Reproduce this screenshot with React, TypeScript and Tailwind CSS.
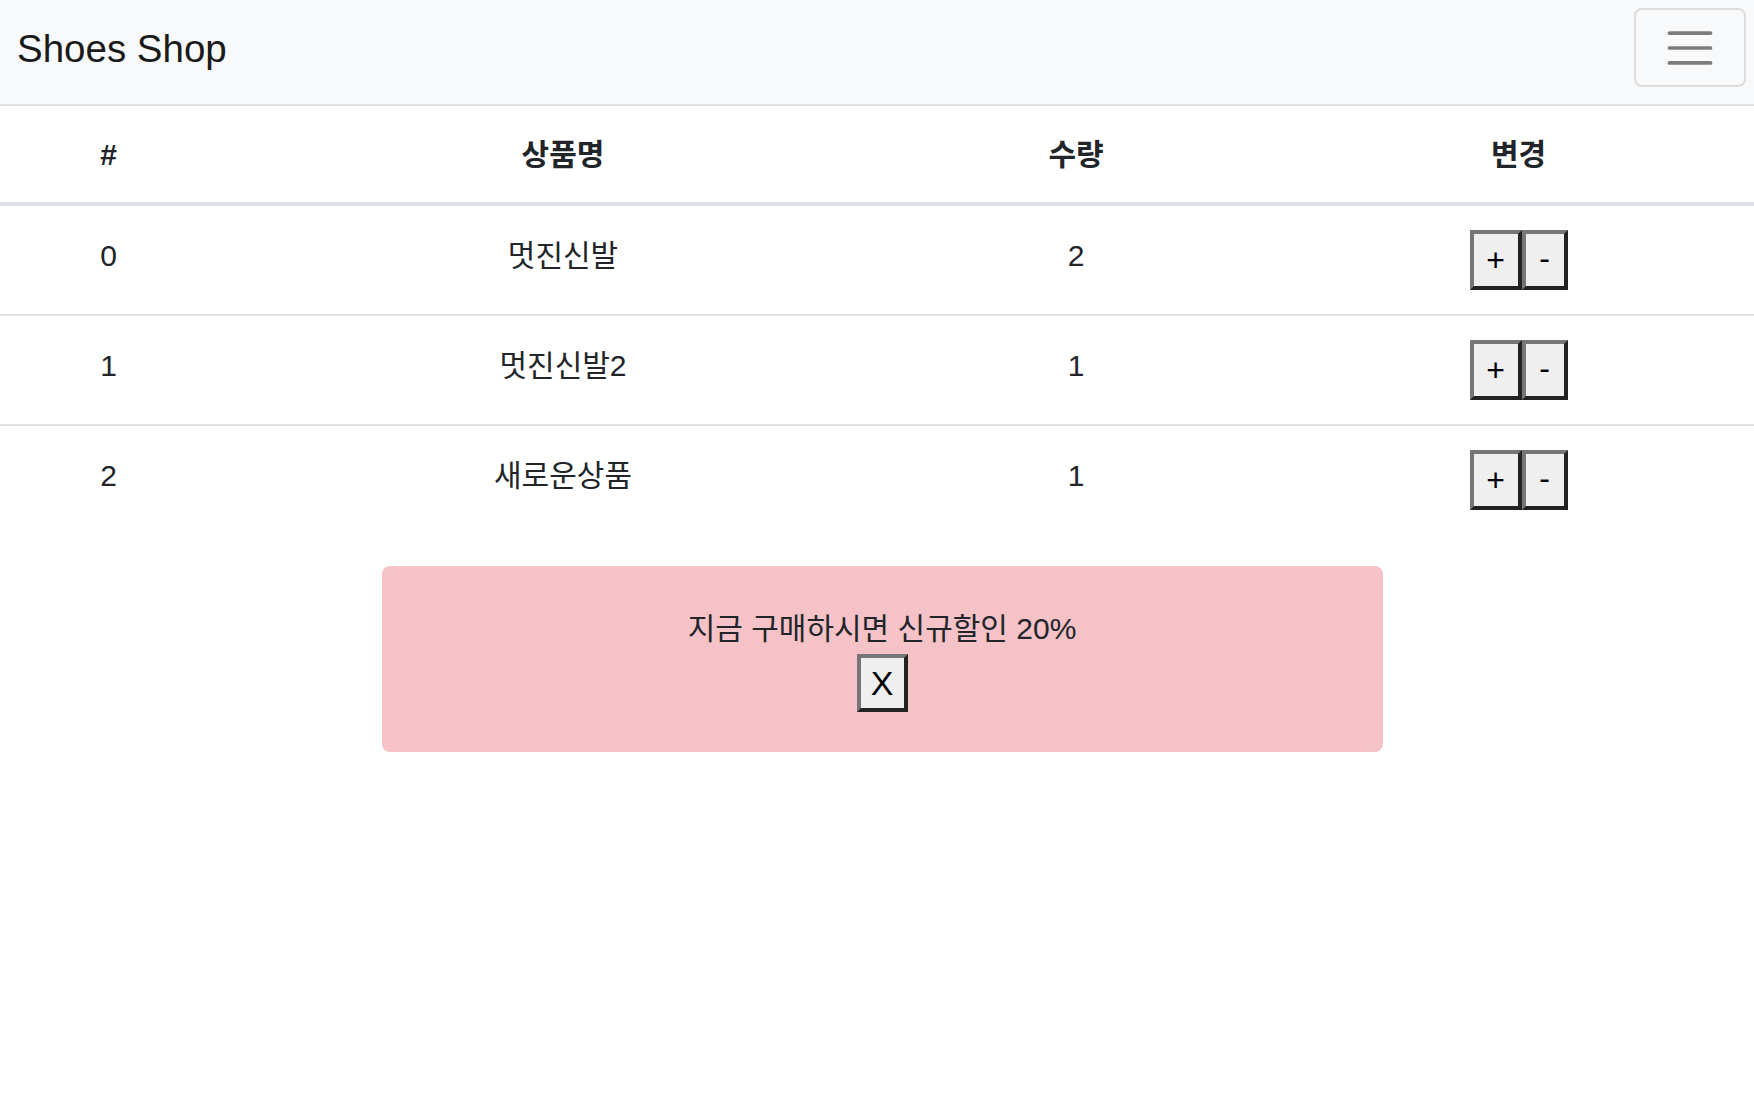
import React from 'react';

const font = { fontFamily: '"Liberation Sans", "Noto Sans CJK KR", sans-serif' };

const items = [
  { id: 0, name: '멋진신발', count: 2 },
  { id: 1, name: '멋진신발2', count: 1 },
  { id: 2, name: '새로운상품', count: 1 },
];

const btn =
  'h-[60px] flex items-center justify-center bg-[#efefef] text-black text-[32px] leading-none border-[4px] border-t-[#767676] border-l-[#767676] border-r-[#222222] border-b-[#222222]';

const App: React.FC = () => {
  return (
    <div className="min-h-screen bg-white text-[#212529]" style={font}>
      {/* navbar */}
      <nav className="h-[104px] bg-[#f8f9fa] flex items-center justify-between pl-[17px] pr-[8px]">
        <span className="text-[38.5px] leading-none text-[#1a1a1a] pb-[6px]">Shoes Shop</span>
        <button className="w-[112px] h-[79px] mb-[9px] rounded-[8px] border-2 border-[#dcdcdc] flex items-center justify-center">
          <svg width="56" height="56" viewBox="0 0 30 30">
            <path d="M4 7h22M4 15h22M4 23h22" stroke="rgba(0,0,0,0.5)" strokeWidth="2" strokeLinecap="round" />
          </svg>
        </button>
      </nav>

      {/* table */}
      <div className="border-t-2 border-[#dee2e6]">
        <div className="grid grid-cols-[217px_692px_334px_1fr] h-[100px] items-center text-center text-[30px] font-bold border-b-4 border-[#dee2e6]">
          <div>#</div>
          <div>상품명</div>
          <div>수량</div>
          <div className="pl-[40px]">변경</div>
        </div>
        {items.map((item, i) => (
          <div
            key={item.id}
            className={
              'grid grid-cols-[217px_692px_334px_1fr] h-[108px] text-center text-[30px] leading-[45px] box-content ' +
              (i > 0 ? 'border-t-2 border-[#dee2e6]' : '')
            }
          >
            <div className="pt-[27px]">{item.id}</div>
            <div className="pt-[27px]">{item.name}</div>
            <div className="pt-[27px]">{item.count}</div>
            <div className="pt-[24px] pl-[40px] flex justify-center items-start">
              <button className={btn + ' w-[52px]'}>+</button>
              <button className={btn + ' w-[46px] pb-[4px]'}>-</button>
            </div>
          </div>
        ))}
      </div>

      {/* alert */}
      <div className="flex justify-center pl-[10px] mt-[32px]">
        <div className="w-[1001px] rounded-[8px] bg-[#f5c2c7] pt-[40px] pb-[40px] flex flex-col items-center text-[30px]">
          <p className="leading-[45px] mb-[3px]">지금 구매하시면 신규할인 20%</p>
          <button className={btn.replace('h-[60px]', 'h-[58px]') + ' w-[51px] text-[34px]'}>X</button>
        </div>
      </div>
    </div>
  );
};

export default App;
